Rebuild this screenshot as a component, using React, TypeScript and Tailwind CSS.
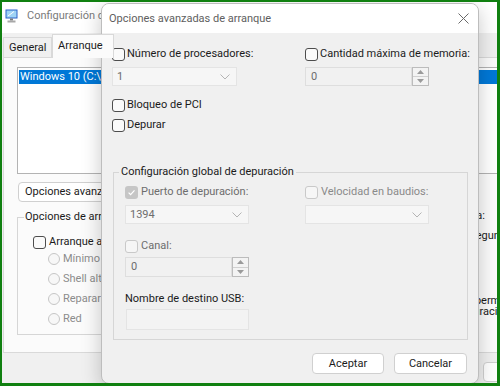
import React from "react";

function Check({ checked = false, disabled = false }: { checked?: boolean; disabled?: boolean }) {
  if (checked) {
    return (
      <span className="w-[13px] h-[13px] rounded-[3px] bg-[#c6c6c6] flex items-center justify-center shrink-0">
        <svg width="9" height="9" viewBox="0 0 9 9">
          <path d="M1.6 4.7 3.6 6.7 7.5 2.3" fill="none" stroke="#fff" strokeWidth="1.2" />
        </svg>
      </span>
    );
  }
  return (
    <span
      className={
        disabled
          ? "w-[13px] h-[13px] rounded-[3px] border border-[#c9c9c9] bg-[#f6f6f6] shrink-0"
          : "w-[13px] h-[13px] rounded-[3px] border border-[#4d4d4d] bg-[#fafafa] shrink-0"
      }
    />
  );
}

function Radio() {
  return <span className="w-[12px] h-[12px] rounded-full border border-[#c6c6c6] bg-[#f7f7f7] shrink-0" />;
}

function Chevron() {
  return (
    <svg width="10" height="6" viewBox="0 0 10 6">
      <path d="M0.5 0.5 5 5 9.5 0.5" fill="none" stroke="#b4b4b4" strokeWidth="1" />
    </svg>
  );
}

function Spin({ value }: { value: string }) {
  return (
    <div className="flex h-full">
      <div className="flex-1 flex items-center pl-[5px] border border-[#dedede] bg-[#f1f1f1] text-[#6d6d6d]">
        {value}
      </div>
      <div className="w-[17px] flex flex-col border border-[#bcbcbc] bg-[#f3f3f3]">
        <div className="flex-1 flex items-center justify-center border-b border-[#d0d0d0]">
          <svg width="7" height="4" viewBox="0 0 7 4">
            <path d="M0 4 3.5 0 7 4Z" fill="#9a9a9a" />
          </svg>
        </div>
        <div className="flex-1 flex items-center justify-center">
          <svg width="7" height="4" viewBox="0 0 7 4">
            <path d="M0 0 3.5 4 7 0Z" fill="#9a9a9a" />
          </svg>
        </div>
      </div>
    </div>
  );
}

function MonitorIcon() {
  return (
    <svg width="13" height="14" viewBox="0 0 13 14">
      <rect x="0.5" y="0.5" width="12" height="9" fill="#2a62c9" />
      <rect x="1.5" y="1.5" width="10" height="7" fill="#9fd3f5" />
      <path d="M3 7 9 2.5" stroke="#ffffff" strokeWidth="1" />
      <rect x="5" y="9.5" width="3" height="2" fill="#7a7a7a" />
      <rect x="2.5" y="11.5" width="8" height="2" fill="#a8a8a8" />
    </svg>
  );
}

export default function App() {
  return (
    <div className="relative w-[500px] h-[386px] overflow-hidden whitespace-nowrap border-l-2 border-t-2 border-r-[3px] border-b-[3px] border-[#108010] bg-[#f0f0f0] text-[11px] leading-4 text-[#1b1b1b] font-['Roboto',sans-serif]">
      {/* background window */}
      <div className="flex flex-col w-[600px] h-full">
        <div className="h-[31px] shrink-0 bg-white flex items-center pl-[3px] pb-[4px] gap-[9px] text-[#7a7a7a]">
          <MonitorIcon />
          <span>Configuración del sistema</span>
        </div>

        <div className="flex-1 flex flex-col pl-[1px]">
          {/* tabs */}
          <div className="flex items-end h-[24px] shrink-0">
            <div className="h-[20px] w-[49px] border border-b-0 border-[#d9d9d9] pl-[5px] leading-[19px]">General</div>
            <div className="relative z-10 -mb-px h-[24px] w-[62px] border border-b-0 border-[#d9d9d9] bg-[#fbfbfb] pl-[5px] leading-[22px]">
              Arranque
            </div>
          </div>

          {/* page */}
          <div className="h-[296px] shrink-0 border border-[#d9d9d9] bg-[#fbfbfb] flex flex-col">
            <div className="ml-[13px] mt-[9px] h-[107px] w-[560px] border border-[#b3b3b3] bg-white">
              <div className="mt-[2px] ml-px h-[14px] leading-[14px] bg-[#0078d7] text-white pl-px">
                Windows 10 (C:\Windows) : Sistema operativo actual
              </div>
            </div>

            <div className="flex">
              <div className="w-[326px] flex flex-col">
                <div className="ml-[14px] mt-[8px] h-[20px] w-[150px] rounded-[4px] border border-[#d0d0d0] bg-white pl-[6px] leading-[18px]">
                  Opciones avanzadas...
                </div>
                <fieldset className="ml-[13px] mt-[7px] h-[126px] w-[300px] border border-[#d6d6d6]">
                  <legend className="ml-[6px] px-px">Opciones de arranque</legend>
                  <div className="pl-[15px]">
                    <div className="mt-[9px] h-[16px] flex items-center gap-[3px]">
                      <Check />
                      <span>Arranque a prueba de errores</span>
                    </div>
                    <div className="-mt-px pl-[15px] text-[#8c8c8c]">
                      {["Mínimo", "Shell alternativo", "Reparar Active Directory", "Red"].map((r) => (
                        <div key={r} className="h-[20px] flex items-center gap-[3px]">
                          <Radio />
                          <span>{r}</span>
                        </div>
                      ))}
                    </div>
                  </div>
                </fieldset>
              </div>

              {/* right column of the page */}
              <div className="flex flex-col">
                <div className="mt-[34px] w-[155px] text-right">Tiempo de espera:</div>
                <div className="mt-[2px] flex items-center h-[20px]">
                  <div className="ml-[91px] w-[43px] h-[20px] border border-[#b3b3b3] bg-white pl-[4px] leading-[18px]">30</div>
                  <span className="ml-[6px]">segundos</span>
                </div>
                <div className="mt-[49px] ml-[113px] leading-[11px]">
                  <div>Hacer permanente toda la</div>
                  <div>configuración de arranque</div>
                </div>
              </div>
            </div>
          </div>

          {/* bottom buttons */}
          <div className="flex gap-[6px] pl-[480px] pt-[9px]">
            <div className="h-[20px] w-[75px] rounded-[4px] border border-[#d0d0d0] bg-white" />
            <div className="h-[20px] w-[75px] rounded-[4px] border border-[#d0d0d0] bg-white" />
          </div>
        </div>
      </div>

      {/* dialog */}
      <div className="absolute left-[99px] top-[1px] w-[378px] h-[381px] rounded-[8px] border border-[#bdbdbd] bg-[#f0f0f0] shadow-[0_6px_20px_rgba(0,0,0,0.22)] overflow-hidden flex flex-col">
        <div className="h-[29px] shrink-0 bg-white flex items-center justify-between pl-[7px] pr-[9px] text-[#5e5e5e]">
          <span>Opciones avanzadas de arranque</span>
          <svg width="11" height="11" viewBox="0 0 11 11">
            <path d="M0.5 0.5 10.5 10.5M10.5 0.5 0.5 10.5" stroke="#6a6a6a" strokeWidth="1" />
          </svg>
        </div>

        <div className="flex-1 flex flex-col pl-[10px] pt-[13px]">
          <div className="grid grid-cols-[193px_170px]">
            <div>
              <div className="h-[16px] flex items-center gap-[2px]">
                <Check />
                <span>Número de procesadores:</span>
              </div>
              <div className="mt-[5px] h-[19px] w-[125px] border border-[#e4e4e4] bg-[#f6f6f6] flex items-center justify-between pl-[4px] pr-[6px] text-[#6d6d6d]">
                <span>1</span>
                <Chevron />
              </div>
            </div>
            <div>
              <div className="h-[16px] flex items-center gap-[2px]">
                <Check />
                <span>Cantidad máxima de memoria:</span>
              </div>
              <div className="mt-[5px] h-[19px] w-[124px]">
                <Spin value="0" />
              </div>
            </div>
          </div>

          <div className="mt-[11px] h-[16px] flex items-center gap-[2px]">
            <Check />
            <span>Bloqueo de PCI</span>
          </div>
          <div className="mt-[4px] h-[16px] flex items-center gap-[2px]">
            <Check />
            <span>Depurar</span>
          </div>

          <fieldset className="mt-[31px] ml-px h-[176px] w-[355px] border border-[#d6d6d6]">
            <legend className="ml-[5px] px-[2px]">Configuración global de depuración</legend>
            <div className="pl-[11px] pt-[4px]">
              <div className="grid grid-cols-[180px_150px] text-[#6d6d6d]">
                <div>
                  <div className="h-[16px] flex items-center gap-[3px]">
                    <Check checked />
                    <span>Puerto de depuración:</span>
                  </div>
                  <div className="mt-[5px] h-[19px] w-[124px] border border-[#e4e4e4] bg-[#f6f6f6] flex items-center justify-between pl-[4px] pr-[6px]">
                    <span>1394</span>
                    <Chevron />
                  </div>
                </div>
                <div className="text-[#8a8a8a]">
                  <div className="h-[16px] flex items-center gap-[3px]">
                    <Check disabled />
                    <span>Velocidad en baudios:</span>
                  </div>
                  <div className="mt-[5px] h-[19px] w-[124px] border border-[#e4e4e4] bg-[#f6f6f6] flex items-center justify-end pr-[6px]">
                    <Chevron />
                  </div>
                </div>
              </div>

              <div className="mt-[14px] h-[16px] flex items-center gap-[3px] text-[#6d6d6d]">
                <Check disabled />
                <span>Canal:</span>
              </div>
              <div className="mt-[3px] h-[20px] w-[124px]">
                <Spin value="0" />
              </div>

              <div className="mt-[14px] h-[16px] flex items-center">Nombre de destino USB:</div>
              <div className="mt-[2px] ml-px h-[21px] w-[123px] border border-[#e4e4e4] bg-[#f3f3f3]" />
            </div>
          </fieldset>

          <div className="mt-[13px] flex justify-end gap-[10px] pr-[11px]">
            <div className="h-[21px] w-[72px] rounded-[4px] border border-[#d0d0d0] bg-white flex items-center justify-center">
              Aceptar
            </div>
            <div className="h-[21px] w-[73px] rounded-[4px] border border-[#d0d0d0] bg-white flex items-center justify-center">
              Cancelar
            </div>
          </div>
        </div>
      </div>
    </div>
  );
}
